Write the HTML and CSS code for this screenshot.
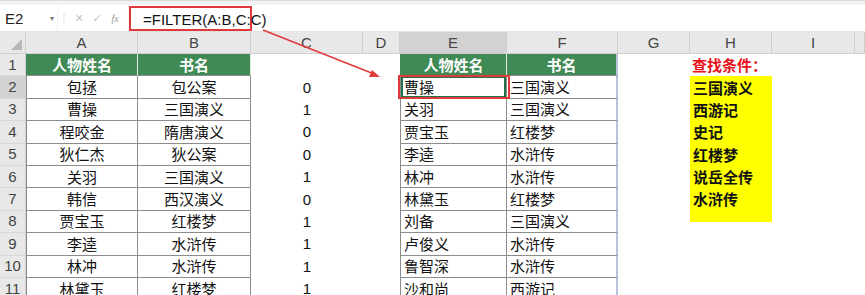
FILE: index.html
```html
<!DOCTYPE html>
<html lang="zh">
<head>
  <meta charset="UTF-8">
  <title>FILTER</title>
  <link rel="stylesheet" href="styles.css">
</head>
<body>

  <!-- 编辑栏 -->
  <div class="formula-bar">
    <div class="name-box">E2<span class="drop">▾</span></div>
    <div class="bar-icons">
      <span class="grip">⋮</span>
      <span>✕</span>
      <span>✓</span>
      <span class="fx">fx</span>
    </div>
    <div class="formula-input">
      <span class="formula-text">=FILTER(A:B,C:C)</span>
    </div>
  </div>

  <!-- 工作表 -->
  <div class="sheet" id="sheet"></div>

  <!-- 标注 -->
  <div class="mark-box"></div>
  <svg class="arrow" width="865" height="295" viewBox="0 0 865 295">
    <line x1="263" y1="30" x2="374" y2="74" stroke="#e23b3b" stroke-width="1.6"/>
    <polygon points="380,77 369,77 372,70" fill="#e23b3b"/>
  </svg>

  <script>
    const cols = ['A', 'B', 'C', 'D', 'E', 'F', 'G', 'H', 'I', ''];

    const left = [
      ['包拯', '包公案', 0], ['曹操', '三国演义', 1], ['程咬金', '隋唐演义', 0],
      ['狄仁杰', '狄公案', 0], ['关羽', '三国演义', 1], ['韩信', '西汉演义', 0],
      ['贾宝玉', '红楼梦', 1], ['李逵', '水浒传', 1], ['林冲', '水浒传', 1],
      ['林黛玉', '红楼梦', 1]
    ];
    const result = [
      ['曹操', '三国演义'], ['关羽', '三国演义'], ['贾宝玉', '红楼梦'],
      ['李逵', '水浒传'], ['林冲', '水浒传'], ['林黛玉', '红楼梦'],
      ['刘备', '三国演义'], ['卢俊义', '水浒传'], ['鲁智深', '水浒传'],
      ['沙和尚', '西游记']
    ];
    const cond = ['三国演义', '西游记', '史记', '红楼梦', '说岳全传', '水浒传'];

    const sheet = document.getElementById('sheet');

    function cell(text, cls) {
      const d = document.createElement('div');
      d.className = 'cell ' + (cls || '');
      d.textContent = text;
      sheet.appendChild(d);
    }

    // 列标题
    cell('', 'corner');
    cols.forEach(c => cell(c, 'col-head' + (c === 'E' ? ' active' : '')));

    // 第1行
    cell('1', 'row-head');
    cell('人物姓名', 'head t first');
    cell('书名', 'head t');
    cell('', ''); cell('', '');
    cell('人物姓名', 'head t first');
    cell('书名', 'head t edge');
    cell('', '');
    cell('查找条件：', 'title');
    cell('', ''); cell('', '');

    for (let i = 0; i < 10; i++) {
      const r = i + 2;
      cell(String(r), 'row-head' + (r === 2 ? ' active' : ''));
      cell(left[i][0], 't first center');
      cell(left[i][1], 't center');
      cell(left[i][2], 'num');
      cell('', '');
      cell(result[i][0], 't first' + (r === 2 ? ' selected' : ''));
      cell(result[i][1], 't edge');
      cell('', '');
      if (i < 6) {
        cell(cond[i], 'cond' + (i === 5 ? ' last' : ''));
      } else {
        cell('', '');
      }
      cell('', ''); cell('', '');
    }
  </script>

</body>
</html>
```

FILE: styles.css
```css
body {
  margin: 0;
  width: 865px;
  height: 295px;
  overflow: hidden;
  position: relative;
  background: #fff;
  font-family: "Noto Sans CJK SC", "Noto Sans", sans-serif;
  color: #111;
}

/* 编辑栏 */
.formula-bar {
  display: flex;
  align-items: stretch;
  height: 31px;
  padding-top: 4px;
  box-sizing: border-box;
  background: #f3f3f3;
  border-top: 1px solid #dcdcdc;
}

.name-box {
  width: 57px;
  background: #fff;
  font-family: "Liberation Sans", sans-serif;
  font-size: 15px;
  line-height: 27px;
  padding-left: 5px;
  box-sizing: border-box;
  position: relative;
  color: #222;
}

.drop {
  position: absolute;
  right: 3px;
  top: 0;
  font-size: 8px;
  color: #777;
}

.bar-icons {
  width: 70px;
  display: flex;
  align-items: center;
  gap: 0;
  color: #c4c4c4;
  font-family: "DejaVu Sans", sans-serif;
  font-size: 11px;
  background: #fff;
  margin-left: 1px;
}

.bar-icons span {
  width: 18px;
  text-align: center;
}

.bar-icons .grip {
  width: 12px;
  color: #d0d0d0;
}

.bar-icons .fx {
  font-family: "Liberation Serif", serif;
  font-style: italic;
  font-size: 10px;
  color: #999;
}

.formula-input {
  flex: 1;
  background: #fff;
  margin-left: 1px;
  display: flex;
  align-items: stretch;
}

.formula-text {
  display: block;
  width: 123px;
  box-sizing: border-box;
  border: 2px solid #e0393b;
  font-family: "Liberation Sans", sans-serif;
  font-size: 15px;
  line-height: 23px;
  padding-left: 12px;
  color: #111;
  margin-top: 1px;
}

/* 工作表 */
.sheet {
  display: grid;
  grid-template-columns: 26px 112px 113px 112px 37px 107px 111px 72px 82px 83px 1fr;
  grid-template-rows: 22px;
  grid-auto-rows: 22.4px;
  margin-top: 0;
  border-top: 1px solid #e2e2e2;
}

.cell {
  box-sizing: border-box;
  font-size: 15px;
  line-height: 20px;
  display: flex;
  align-items: center;
  white-space: nowrap;
  overflow: hidden;
}

.corner {
  background: #e8e8e8;
  border-right: 1px solid #cfcfcf;
  border-bottom: 1px solid #cfcfcf;
  position: relative;
}

.corner::after {
  content: "";
  position: absolute;
  right: 3px;
  bottom: 3px;
  border-left: 11px solid transparent;
  border-bottom: 11px solid #b7b7b7;
}

.col-head {
  background: #e8e8e8;
  justify-content: center;
  color: #444;
  font-family: "Liberation Sans", sans-serif;
  font-size: 15px;
  border-right: 1px solid #cfcfcf;
  border-bottom: 1px solid #cfcfcf;
}

.row-head {
  background: #e8e8e8;
  justify-content: center;
  color: #444;
  font-family: "Liberation Sans", sans-serif;
  font-size: 15px;
  border-right: 1px solid #cfcfcf;
  border-bottom: 1px solid #d8d8d8;
}

.col-head.active,
.row-head.active {
  background: #d2d2d2;
}

/* 表格 */
.t {
  border-right: 1px solid #8c8c8c;
  border-bottom: 1px solid #8c8c8c;
  padding-left: 3px;
}

.t.first {
  border-left: 1px solid #8c8c8c;
}

.t.edge {
  border-right: 2px solid #b9c3db;
}

.center {
  justify-content: center;
  padding-left: 0;
}

.head {
  background: #3f8a55;
  color: #fff;
  font-weight: bold;
  justify-content: center;
  padding-left: 0;
  border-right-color: #dfe9e2;
  border-bottom-color: #8c8c8c;
}

.head.edge {
  border-right: 2px solid #b9c3db;
}

.head.first {
  border-left-color: #3f8a55;
}

.num {
  justify-content: center;
  font-family: "Liberation Sans", sans-serif;
}

.selected {
  box-shadow: inset 0 0 0 2px #217346;
}

.title {
  color: #e8121b;
  font-weight: bold;
  padding-left: 2px;
}

.cond {
  background: #ffff00;
  font-weight: bold;
  padding-left: 3px;
}

.cond.last {
  height: 34px;
  align-items: flex-start;
  padding-top: 1px;
}

/* 标注 */
.mark-box {
  position: absolute;
  left: 398px;
  top: 75px;
  width: 112px;
  height: 24px;
  border: 2px solid #e0393b;
  box-sizing: border-box;
}

.arrow {
  position: absolute;
  left: 0;
  top: 0;
  pointer-events: none;
}
```
